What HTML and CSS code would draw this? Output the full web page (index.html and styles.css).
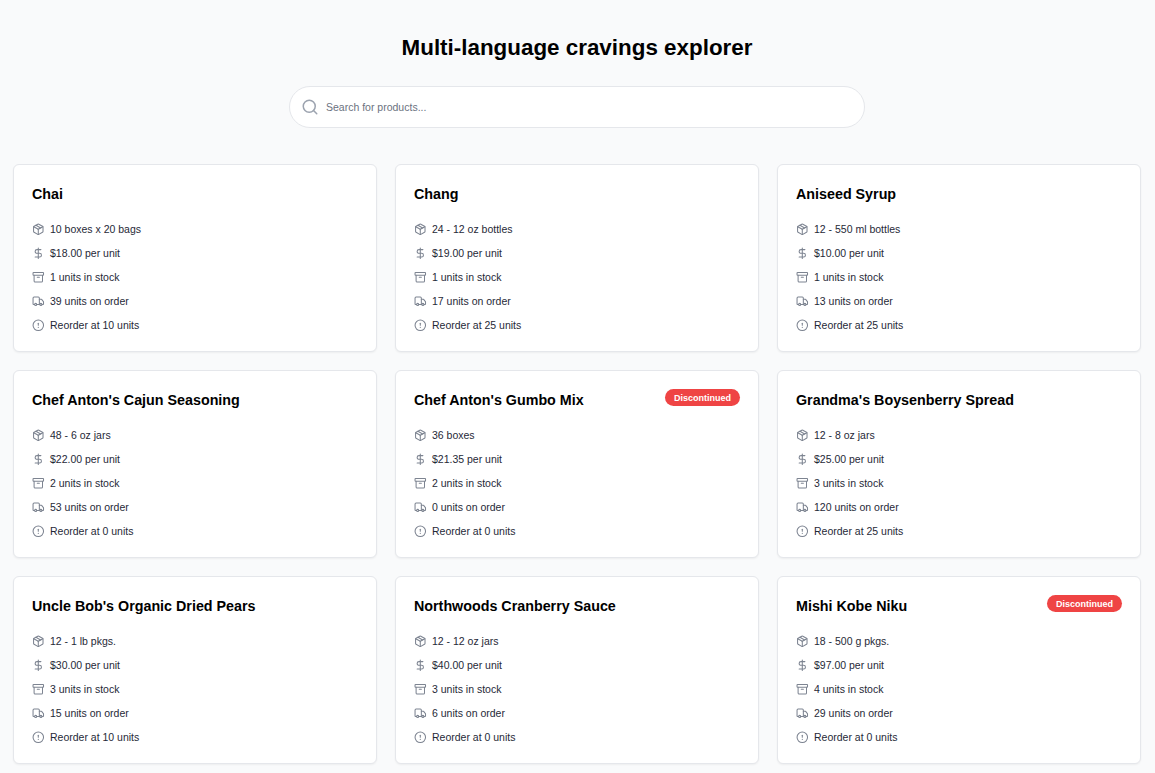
FILE: index.html
```html
<!DOCTYPE html>
<html lang="en">
<head>
<meta charset="utf-8">
<title>Multi-language cravings explorer</title>
<link rel="stylesheet" href="styles.css">
</head>
<body>
<svg class="sprite" width="0" height="0" aria-hidden="true">
  <symbol id="i-package" viewBox="0 0 24 24"><path d="m7.5 4.27 9 5.15"/><path d="M21 8a2 2 0 0 0-1-1.73l-7-4a2 2 0 0 0-2 0l-7 4A2 2 0 0 0 3 8v8a2 2 0 0 0 1 1.73l7 4a2 2 0 0 0 2 0l7-4A2 2 0 0 0 21 16Z"/><path d="m3.3 7 8.7 5 8.7-5"/><path d="M12 22V12"/></symbol>
  <symbol id="i-dollar" viewBox="0 0 24 24"><line x1="12" x2="12" y1="2" y2="22"/><path d="M17 5H9.5a3.5 3.5 0 0 0 0 7h5a3.5 3.5 0 0 1 0 7H6"/></symbol>
  <symbol id="i-archive" viewBox="0 0 24 24"><rect width="20" height="5" x="2" y="3" rx="1"/><path d="M4 8v11a2 2 0 0 0 2 2h12a2 2 0 0 0 2-2V8"/><path d="M10 12h4"/></symbol>
  <symbol id="i-truck" viewBox="0 0 24 24"><path d="M14 18V6a2 2 0 0 0-2-2H4a2 2 0 0 0-2 2v11a1 1 0 0 0 1 1h2"/><path d="M15 18H9"/><path d="M19 18h2a1 1 0 0 0 1-1v-3.65a1 1 0 0 0-.22-.624l-3.48-4.35A1 1 0 0 0 17.52 8H14"/><circle cx="17" cy="18" r="2"/><circle cx="7" cy="18" r="2"/></symbol>
  <symbol id="i-alert" viewBox="0 0 24 24"><circle cx="12" cy="12" r="10"/><line x1="12" x2="12" y1="8" y2="12"/><line x1="12" x2="12.01" y1="16" y2="16"/></symbol>
  <symbol id="i-search" viewBox="0 0 24 24"><circle cx="11" cy="11" r="8"/><path d="m21 21-4.3-4.3"/></symbol>
</svg>
<main class="page">
  <h1 class="title">Multi-language cravings explorer</h1>
  <div class="search">
    <svg class="search-icon"><use href="#i-search"/></svg>
    <input class="search-input" type="text" placeholder="Search for products...">
  </div>
  <section class="grid">
    <article class="card">
      <header class="card-head"><h2 class="card-title">Chai</h2></header>
      <ul class="facts">
        <li class="fact"><svg class="icon"><use href="#i-package"/></svg>10 boxes x 20 bags</li>
        <li class="fact"><svg class="icon"><use href="#i-dollar"/></svg>$18.00 per unit</li>
        <li class="fact"><svg class="icon"><use href="#i-archive"/></svg>1 units in stock</li>
        <li class="fact"><svg class="icon"><use href="#i-truck"/></svg>39 units on order</li>
        <li class="fact"><svg class="icon"><use href="#i-alert"/></svg>Reorder at 10 units</li>
      </ul>
    </article>
    <article class="card">
      <header class="card-head"><h2 class="card-title">Chang</h2></header>
      <ul class="facts">
        <li class="fact"><svg class="icon"><use href="#i-package"/></svg>24 - 12 oz bottles</li>
        <li class="fact"><svg class="icon"><use href="#i-dollar"/></svg>$19.00 per unit</li>
        <li class="fact"><svg class="icon"><use href="#i-archive"/></svg>1 units in stock</li>
        <li class="fact"><svg class="icon"><use href="#i-truck"/></svg>17 units on order</li>
        <li class="fact"><svg class="icon"><use href="#i-alert"/></svg>Reorder at 25 units</li>
      </ul>
    </article>
    <article class="card">
      <header class="card-head"><h2 class="card-title">Aniseed Syrup</h2></header>
      <ul class="facts">
        <li class="fact"><svg class="icon"><use href="#i-package"/></svg>12 - 550 ml bottles</li>
        <li class="fact"><svg class="icon"><use href="#i-dollar"/></svg>$10.00 per unit</li>
        <li class="fact"><svg class="icon"><use href="#i-archive"/></svg>1 units in stock</li>
        <li class="fact"><svg class="icon"><use href="#i-truck"/></svg>13 units on order</li>
        <li class="fact"><svg class="icon"><use href="#i-alert"/></svg>Reorder at 25 units</li>
      </ul>
    </article>
    <article class="card">
      <header class="card-head"><h2 class="card-title">Chef Anton's Cajun Seasoning</h2></header>
      <ul class="facts">
        <li class="fact"><svg class="icon"><use href="#i-package"/></svg>48 - 6 oz jars</li>
        <li class="fact"><svg class="icon"><use href="#i-dollar"/></svg>$22.00 per unit</li>
        <li class="fact"><svg class="icon"><use href="#i-archive"/></svg>2 units in stock</li>
        <li class="fact"><svg class="icon"><use href="#i-truck"/></svg>53 units on order</li>
        <li class="fact"><svg class="icon"><use href="#i-alert"/></svg>Reorder at 0 units</li>
      </ul>
    </article>
    <article class="card">
      <header class="card-head"><h2 class="card-title">Chef Anton's Gumbo Mix</h2><span class="badge">Discontinued</span></header>
      <ul class="facts">
        <li class="fact"><svg class="icon"><use href="#i-package"/></svg>36 boxes</li>
        <li class="fact"><svg class="icon"><use href="#i-dollar"/></svg>$21.35 per unit</li>
        <li class="fact"><svg class="icon"><use href="#i-archive"/></svg>2 units in stock</li>
        <li class="fact"><svg class="icon"><use href="#i-truck"/></svg>0 units on order</li>
        <li class="fact"><svg class="icon"><use href="#i-alert"/></svg>Reorder at 0 units</li>
      </ul>
    </article>
    <article class="card">
      <header class="card-head"><h2 class="card-title">Grandma's Boysenberry Spread</h2></header>
      <ul class="facts">
        <li class="fact"><svg class="icon"><use href="#i-package"/></svg>12 - 8 oz jars</li>
        <li class="fact"><svg class="icon"><use href="#i-dollar"/></svg>$25.00 per unit</li>
        <li class="fact"><svg class="icon"><use href="#i-archive"/></svg>3 units in stock</li>
        <li class="fact"><svg class="icon"><use href="#i-truck"/></svg>120 units on order</li>
        <li class="fact"><svg class="icon"><use href="#i-alert"/></svg>Reorder at 25 units</li>
      </ul>
    </article>
    <article class="card">
      <header class="card-head"><h2 class="card-title">Uncle Bob's Organic Dried Pears</h2></header>
      <ul class="facts">
        <li class="fact"><svg class="icon"><use href="#i-package"/></svg>12 - 1 lb pkgs.</li>
        <li class="fact"><svg class="icon"><use href="#i-dollar"/></svg>$30.00 per unit</li>
        <li class="fact"><svg class="icon"><use href="#i-archive"/></svg>3 units in stock</li>
        <li class="fact"><svg class="icon"><use href="#i-truck"/></svg>15 units on order</li>
        <li class="fact"><svg class="icon"><use href="#i-alert"/></svg>Reorder at 10 units</li>
      </ul>
    </article>
    <article class="card">
      <header class="card-head"><h2 class="card-title">Northwoods Cranberry Sauce</h2></header>
      <ul class="facts">
        <li class="fact"><svg class="icon"><use href="#i-package"/></svg>12 - 12 oz jars</li>
        <li class="fact"><svg class="icon"><use href="#i-dollar"/></svg>$40.00 per unit</li>
        <li class="fact"><svg class="icon"><use href="#i-archive"/></svg>3 units in stock</li>
        <li class="fact"><svg class="icon"><use href="#i-truck"/></svg>6 units on order</li>
        <li class="fact"><svg class="icon"><use href="#i-alert"/></svg>Reorder at 0 units</li>
      </ul>
    </article>
    <article class="card">
      <header class="card-head"><h2 class="card-title">Mishi Kobe Niku</h2><span class="badge">Discontinued</span></header>
      <ul class="facts">
        <li class="fact"><svg class="icon"><use href="#i-package"/></svg>18 - 500 g pkgs.</li>
        <li class="fact"><svg class="icon"><use href="#i-dollar"/></svg>$97.00 per unit</li>
        <li class="fact"><svg class="icon"><use href="#i-archive"/></svg>4 units in stock</li>
        <li class="fact"><svg class="icon"><use href="#i-truck"/></svg>29 units on order</li>
        <li class="fact"><svg class="icon"><use href="#i-alert"/></svg>Reorder at 0 units</li>
      </ul>
    </article>
  </section>
</main>
</body>
</html>
```

FILE: styles.css
```css
* { box-sizing: border-box; }
html, body { margin: 0; padding: 0; }
body {
  background: #f9fafb;
  color: #000;
  font-family: "Liberation Sans", Arial, sans-serif;
}
.sprite { position: absolute; }
symbol, .icon, .search-icon {
  fill: none;
  stroke: currentColor;
  stroke-linecap: round;
  stroke-linejoin: round;
}
.page {
  padding: 33px 14px 32px 13px;
}
.title {
  margin: 0 0 23px;
  font-size: 22.4px;
  line-height: 30px;
  font-weight: 700;
  text-align: center;
}
.search {
  display: flex;
  align-items: center;
  gap: 7px;
  width: 576px;
  height: 42px;
  margin: 0 auto 36px;
  padding: 0 11px;
  background: #fff;
  border: 1px solid #e5e7eb;
  border-radius: 21px;
}
.search-icon {
  flex: none;
  width: 18px;
  height: 18px;
  color: #9ca3af;
  stroke-width: 2;
}
.search-input {
  flex: 1;
  min-width: 0;
  border: 0;
  outline: 0;
  padding: 0;
  background: transparent;
  font-family: inherit;
  font-size: 10.5px;
  color: #374151;
}
.search-input::placeholder { color: #6b7280; opacity: 1; }
.grid {
  display: grid;
  grid-template-columns: repeat(3, 1fr);
  gap: 18px;
}
.card {
  height: 188px;
  padding: 17px 18px;
  background: #fff;
  border: 1px solid #e5e7eb;
  border-radius: 6px;
  box-shadow: 0 1px 2px rgba(0, 0, 0, 0.05);
}
.card-head {
  display: flex;
  align-items: flex-start;
  justify-content: space-between;
  height: 24px;
  margin-bottom: 14px;
}
.card-title {
  margin: 0;
  font-size: 14.3px;
  line-height: 24px;
  font-weight: 700;
}
.badge {
  margin-top: 1px;
  padding: 0 9px;
  height: 17px;
  line-height: 18px;
  font-size: 9px;
  font-weight: 700;
  color: #fff;
  background: #ef4444;
  border-radius: 9px;
}
.facts {
  display: flex;
  flex-direction: column;
  gap: 6px;
  margin: 0;
  padding: 0;
  list-style: none;
}
.fact {
  display: flex;
  align-items: center;
  gap: 5.4px;
  height: 18px;
  font-size: 10.5px;
  color: #1f2937;
}
.icon {
  flex: none;
  width: 12.6px;
  height: 12.6px;
  margin-top: 1px;
  color: #7d8491;
  stroke-width: 2;
}
```
